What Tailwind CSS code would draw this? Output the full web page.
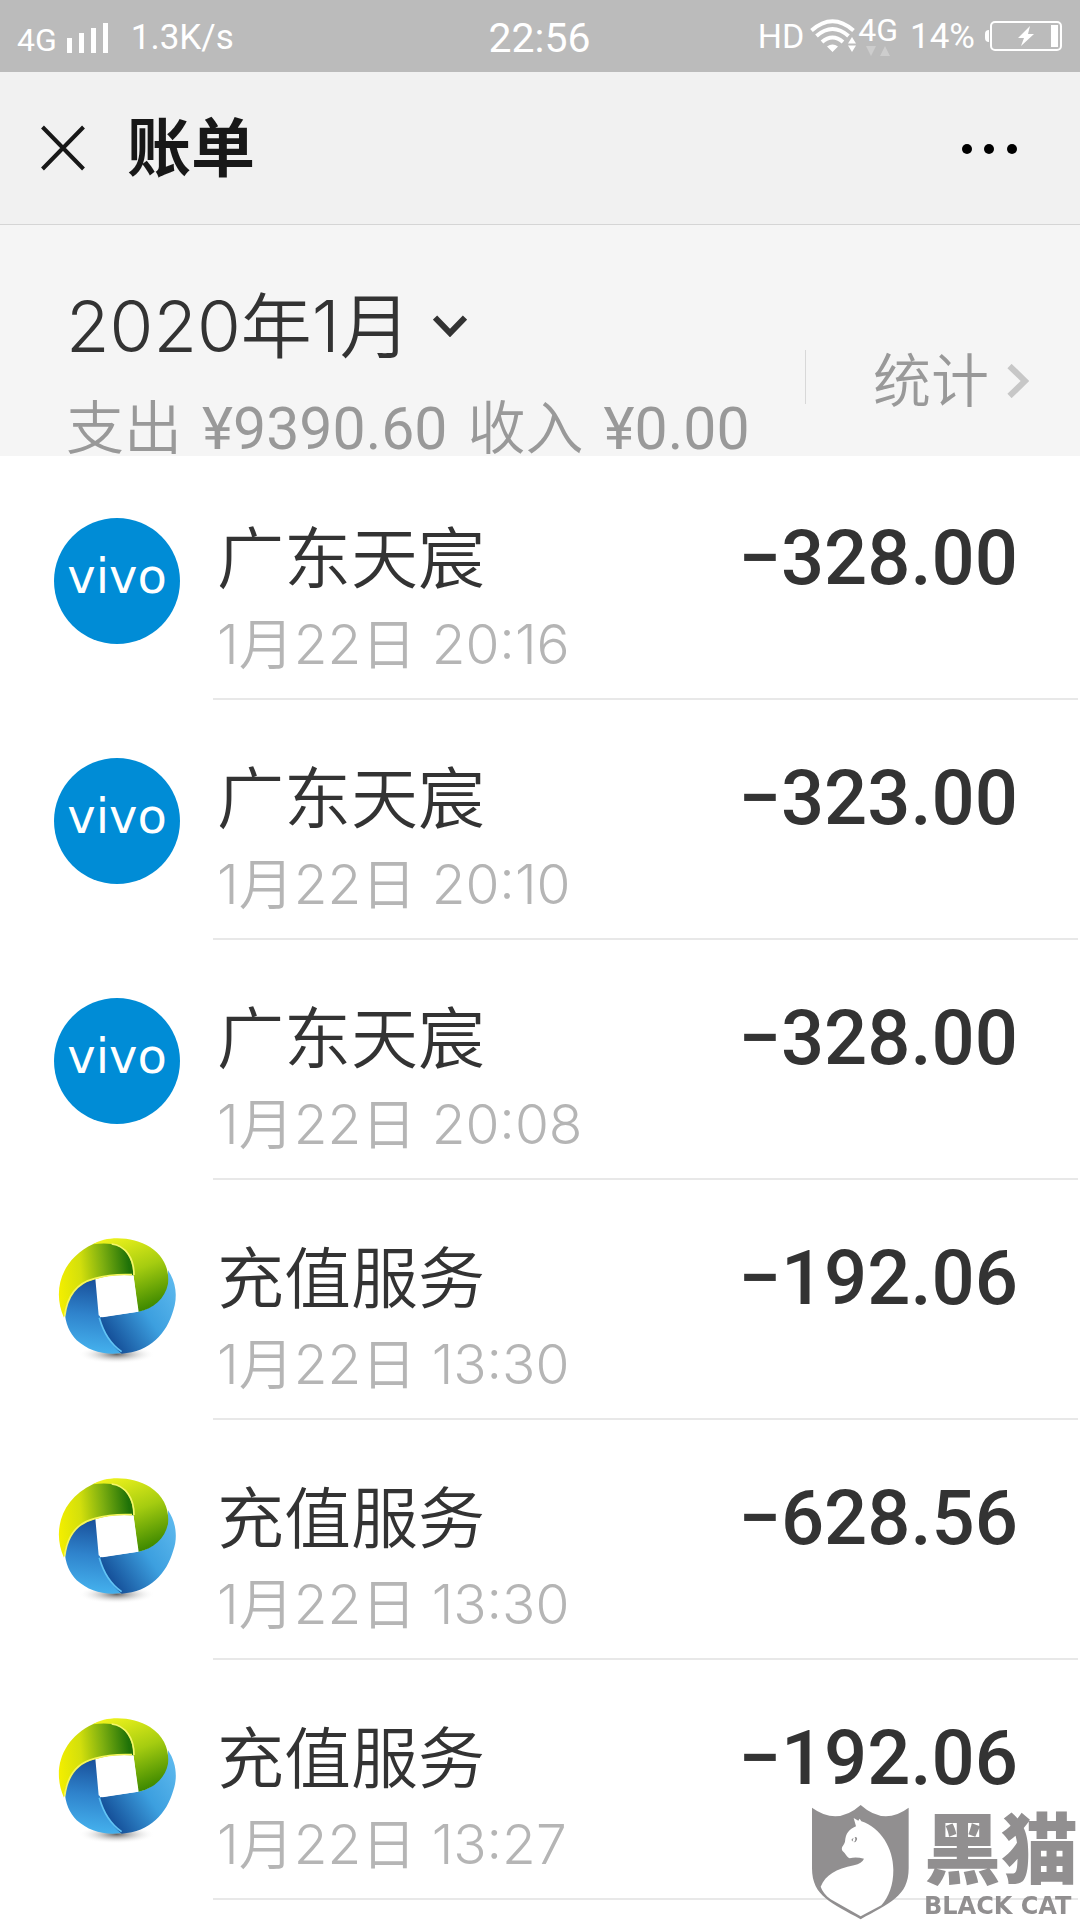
<!DOCTYPE html>
<html lang="zh-CN">
<head>
    <meta charset="UTF-8">
    <meta name="viewport" content="width=device-width, initial-scale=1.0">
    <title>账单</title>
    <script src="https://cdn.jsdelivr.net/npm/@tailwindcss/browser@4"></script>
</head>
<body class="min-h-screen bg-white text-[#333] font-['Inter','Noto_Sans_CJK_SC',sans-serif]">
    <!-- Shared logo artwork -->
    <svg class="absolute top-0 left-0 w-0 h-0">
        <defs>
            <linearGradient id="lime" x1="0" y1=".5" x2="1" y2=".4"><stop offset="0" stop-color="#f2ee00"/><stop offset=".3" stop-color="#d3df0c"/><stop offset=".6" stop-color="#7fb010"/><stop offset=".95" stop-color="#1f7208"/></linearGradient>
            <linearGradient id="leaf" x1=".2" y1="0" x2=".6" y2="1"><stop offset="0" stop-color="#eef21c"/><stop offset=".5" stop-color="#a5cc10"/><stop offset="1" stop-color="#3f8a00"/></linearGradient>
            <linearGradient id="sky" x1="1" y1="0" x2="0" y2=".7"><stop offset="0" stop-color="#62bdf0"/><stop offset=".5" stop-color="#3c9fdf"/><stop offset="1" stop-color="#124a94"/></linearGradient>
            <linearGradient id="sea" x1=".6" y1="0" x2=".5" y2="1"><stop offset="0" stop-color="#174c96"/><stop offset=".5" stop-color="#2f83cc"/><stop offset="1" stop-color="#45b2ee"/></linearGradient>
            <radialGradient id="shade"><stop offset="0" stop-color="#666"/><stop offset="1" stop-color="#fff" stop-opacity="0"/></radialGradient>
        </defs>
        <symbol id="logo-recharge" viewBox="42 83 378 378">
            <ellipse cx="230" cy="432" rx="115" ry="28" fill="url(#shade)"/>
            <path fill="url(#sea)" d="M166 205C120 210 75 240 74 300C75 340 90 370 110 390C150 425 200 438 260 426L280 380 176 315z"/>
            <path fill="url(#sky)" d="M384 180C408 215 414 260 400 300C380 370 330 425 245 430C214 405 190 365 178 322L294 304C340 295 384 260 384 180z"/>
            <path fill="none" stroke="#62c4f5" stroke-width="5" d="M178 322C190 365 210 400 245 424"/>
            <path fill="url(#lime)" d="M72 322C35 240 65 145 160 101C200 85 262 90 272 130Q282 155 279 195Q215 190 165 207Q82 225 72 322z"/>
            <path fill="none" stroke="#f6f65a" stroke-width="5" d="M74 318Q85 225 163 205Q215 190 276 193"/>
            <path fill="url(#leaf)" d="M158 102C200 75 280 78 330 110C375 140 388 180 384 220C375 265 340 295 296 304L280 194C280 145 255 108 215 101Q190 97 158 102z"/>
            <path fill="none" stroke="#f4f66a" stroke-width="5" d="M215 101C258 106 282 145 282 194"/>
            <path fill="#fff" d="M170 210L281 197 294 304 180 321z"/>
        </symbol>
    </svg>

    <!-- Status bar -->
    <div class="grid grid-cols-[1fr_auto_1fr] items-center h-[72px] pl-[17px] pr-[18px] bg-[#bbb] text-white font-['Roboto',sans-serif]">
        <div class="flex items-center">
            <span class="text-[32px] leading-10 pt-2">4G</span>
            <svg class="w-[42px] h-[30px] ml-[10px] mt-1" viewBox="0 0 42 30" fill="currentColor">
                <path d="M0 15h5v15H0zM12 10h5v20h-5zM24 5h5v25h-5zM36 0h5v30h-5z"/>
            </svg>
            <span class="text-[35px] leading-10 ml-[22px] pt-1">1.3K/s</span>
        </div>
        <span class="text-[41px] leading-10 pt-1">22:56</span>
        <div class="flex items-center justify-end">
            <span class="text-[34px] leading-10">HD</span>
            <svg class="w-[46px] h-[34px] ml-[6px]" viewBox="0 0 46 34" fill="none" stroke="currentColor" stroke-width="4">
                <path d="M1.500 11.500Q22.500-7 43.500 11.500M6.500 17Q22.500 3 38.500 17M12 23Q22.500 14 33 23"/>
                <path d="M17 27.500Q22.500 23.500 28 27.500L22.500 33zM42 18l4 6.500h-8zM38 26.500h8L42 33z" fill="currentColor" stroke="none"/>
            </svg>
            <div class="flex flex-col items-center ml-[2px]">
                <span class="text-[32px] leading-7">4G</span>
                <svg class="w-6 h-[10px] mt-[2px]" viewBox="0 0 24 10" fill="#cdcdcd">
                    <path d="M0 0h10L5 10zM19 0l5 10H14z"/>
                </svg>
            </div>
            <span class="text-[35px] leading-10 ml-3 pt-[2px]">14%</span>
            <svg class="w-[77px] h-[30px] ml-[10px]" viewBox="0 0 77 30" fill="currentColor">
                <path d="M4 9v12q-4 0-4-4v-4q0-4 4-4zM66 4h7v22h-7zM45 5L33 17h6l-3 8 13-12h-6z"/>
                <rect x="6" y="1" width="70" height="28" rx="4" fill="none" stroke="currentColor" stroke-width="2"/>
            </svg>
        </div>
    </div>

    <!-- Title bar -->
    <header class="flex items-center h-[153px] pl-[41px] pr-[61px] bg-[#f1f1f1] border-b border-[#d5d5d5] text-[#181818]">
        <button type="button" aria-label="关闭">
            <svg class="w-[44px] h-[46px]" viewBox="0 0 44 46" fill="none" stroke="currentColor" stroke-width="4">
                <path d="M1.500 2l41 42M42.500 2l-41 42"/>
            </svg>
        </button>
        <h1 class="text-[64px] leading-[80px] font-bold ml-[42px]">账单</h1>
        <button type="button" aria-label="更多" class="ml-auto pt-[2px] text-black">
            <svg class="w-[58px] h-[10px]" viewBox="0 0 58 10" fill="currentColor">
                <circle cx="6" cy="5" r="5"/><circle cx="28" cy="5" r="5"/><circle cx="51" cy="5" r="5"/>
            </svg>
        </button>
    </header>

    <!-- Month summary -->
    <section class="flex items-center justify-between h-[231px] pl-[66px] pr-[51px] bg-[#f5f5f5]">
        <div class="pt-[74px]">
            <button type="button" class="flex items-center text-[71px] leading-[82px] font-[350]">
                2020年1月
                <svg class="w-[34px] h-[22px] ml-[22px]" viewBox="0 0 34 22" fill="none" stroke="currentColor" stroke-width="6">
                    <path d="M2 2.500l15 15.500L32 2.500"/>
                </svg>
            </button>
            <p class="flex gap-5 text-[58px] leading-[84px] mt-5 text-[#999] font-['Roboto','Noto_Sans_CJK_SC',sans-serif] whitespace-nowrap">
                <span class="font-[350]">支出</span>
                <span class="text-[59px]">¥9390.60</span>
                <span class="font-[350]">收入</span>
                <span class="text-[59px]">¥0.00</span>
            </p>
        </div>
        <a href="#" class="flex items-center mt-20 text-[58px] leading-[80px] font-[350] text-[#999]">
            <span class="w-px h-[54px] mr-[67px] mb-2 bg-[#d8d8d8]"></span>
            统计
            <svg class="w-[22px] h-[34px] ml-[18px] text-[#c7c7c7]" viewBox="0 0 22 34" fill="none" stroke="currentColor" stroke-width="6">
                <path d="M2.500 2L18 17 2.500 32"/>
            </svg>
        </a>
    </section>

    <!-- Bill list -->
    <ul id="bills" class="pt-1 pl-[54px] pr-[2px]"></ul>

    <!-- Watermark -->
    <div class="fixed right-[2px] bottom-0 flex gap-[15px] items-end text-[#918f90]">
        <svg class="w-[97px] h-[115px]" viewBox="94 75 291 345">
            <path fill="currentColor" d="M94 83Q170 138 240 75Q310 138 384 83V265C384 350 325 370 240 418C155 370 94 350 94 265z"/>
            <path fill="#fff" d="M219 114L233 122 237 116 242 124C300 143 338 205 338 270C338 315 325 350 302 376L240 409 150 358C135 347 124 333 120 320C135 285 165 267 220 256Q244 250 250 236Q225 230 207 235C198 230 196 222 185 212C180 200 190 196 193 185C195 160 205 148 226 139z"/>
            <path fill="currentColor" d="M212 180Q214 175 219 174Q214 180 218 185zM222 171Q231 170 229 179Q226 187 219 187Q227 181 222 171z"/>
        </svg>
        <div class="flex flex-col whitespace-nowrap">
            <span class="text-[77px] leading-[84px] font-black">黑猫</span>
            <span class="text-[24px] leading-7 font-bold font-['DejaVu_Sans',sans-serif]">BLACK CAT</span>
        </div>
    </div>

    <script>
        const logos = {
            vivo: '<circle cx="63" cy="63" r="63" fill="#008cd6"/><text x="63" y="75" text-anchor="middle" font-family="DejaVu Sans" font-size="48" fill="#fff">vivo</text>',
            recharge: '<use href="#logo-recharge" width="126" height="126"/>'
        };

        const bills = [
            { logo: 'vivo', name: '广东天宸', time: '1月22日 20:16', amount: '−328.00' },
            { logo: 'vivo', name: '广东天宸', time: '1月22日 20:10', amount: '−323.00' },
            { logo: 'vivo', name: '广东天宸', time: '1月22日 20:08', amount: '−328.00' },
            { logo: 'recharge', name: '充值服务', time: '1月22日 13:30', amount: '−192.06' },
            { logo: 'recharge', name: '充值服务', time: '1月22日 13:30', amount: '−628.56' },
            { logo: 'recharge', name: '充值服务', time: '1月22日 13:27', amount: '−192.06' }
        ];

        document.getElementById('bills').innerHTML = bills.map(bill => `
            <li class="flex">
                <svg class="w-[126px] h-[126px] mt-[58px] mr-[33px] shrink-0" viewBox="0 0 126 126">${logos[bill.logo]}</svg>
                <div class="flex-1 flex justify-between pt-[58px] pb-[22px] pl-1 pr-[60px] border-b-2 border-[#e8e8e8]">
                    <div>
                        <h2 class="text-[67px] leading-[82px] font-[350]">${bill.name}</h2>
                        <p class="text-[55px] leading-[64px] mt-3 font-[350] text-[#b5b5b5]">${bill.time}</p>
                    </div>
                    <span class="text-[76px] leading-[80px] font-medium font-['Roboto',sans-serif]">${bill.amount}</span>
                </div>
            </li>
        `).join('');
    </script>
</body>
</html>
